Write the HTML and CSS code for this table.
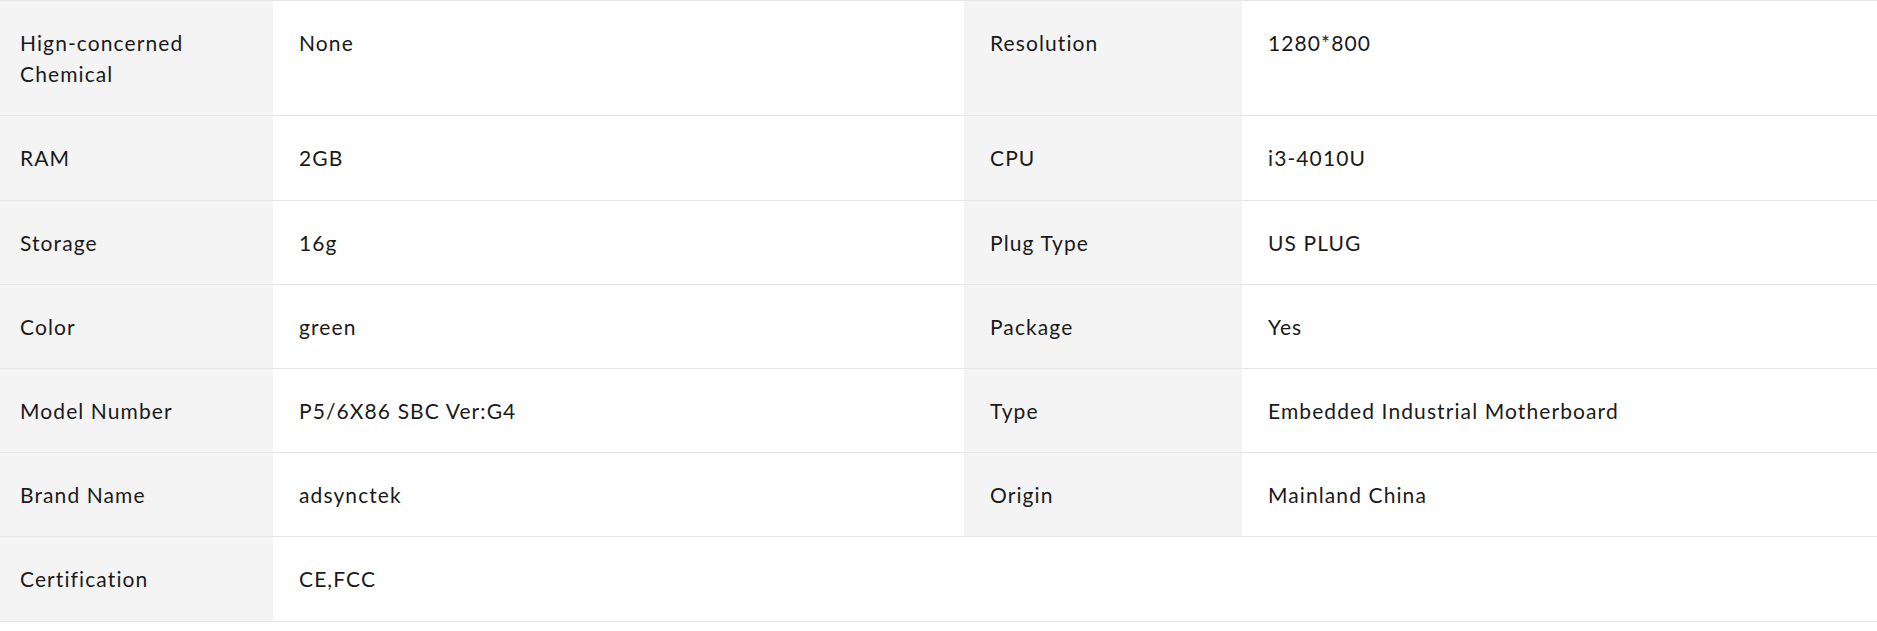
FILE: index.html
```html
<!DOCTYPE html>
<html lang="en">
<head>
  <meta charset="UTF-8">
  <meta name="viewport" content="width=device-width, initial-scale=1.0">
  <title>Specifications</title>
  <link rel="stylesheet" href="styles.css">
</head>
<body>
  <table class="spec-table">
    <colgroup>
      <col class="col-label">
      <col class="col-value">
      <col class="col-label2">
      <col>
    </colgroup>
    <tbody>
      <tr>
        <td class="spec-label">Hign-concerned<br>Chemical</td>
        <td class="spec-value">None</td>
        <td class="spec-label">Resolution</td>
        <td class="spec-value">1280*800</td>
      </tr>
      <tr>
        <td class="spec-label">RAM</td>
        <td class="spec-value">2GB</td>
        <td class="spec-label">CPU</td>
        <td class="spec-value">i3-4010U</td>
      </tr>
      <tr>
        <td class="spec-label">Storage</td>
        <td class="spec-value">16g</td>
        <td class="spec-label">Plug Type</td>
        <td class="spec-value">US PLUG</td>
      </tr>
      <tr>
        <td class="spec-label">Color</td>
        <td class="spec-value">green</td>
        <td class="spec-label">Package</td>
        <td class="spec-value">Yes</td>
      </tr>
      <tr>
        <td class="spec-label">Model Number</td>
        <td class="spec-value">P5/6X86 SBC Ver:G4</td>
        <td class="spec-label">Type</td>
        <td class="spec-value">Embedded Industrial Motherboard</td>
      </tr>
      <tr>
        <td class="spec-label">Brand Name</td>
        <td class="spec-value">adsynctek</td>
        <td class="spec-label">Origin</td>
        <td class="spec-value">Mainland China</td>
      </tr>
      <tr>
        <td class="spec-label">Certification</td>
        <td class="spec-value">CE,FCC</td>
        <td class="spec-empty"></td>
        <td class="spec-empty"></td>
      </tr>
    </tbody>
  </table>
</body>
</html>
```

FILE: styles.css
```css
body {
  margin: 0;
  padding: 0;
  background-color: #fff;
  font-family: Lato, "Open Sans", sans-serif;
  font-size: 21px;
  letter-spacing: 1.1px;
  color: #1a1a1a;
}
.spec-table {
  width: 100%;
  table-layout: fixed;
  border-collapse: collapse;
  border-top: 1px solid #e6e6e6;
}
.col-label {
  width: 273px;
}
.col-value {
  width: 691px;
}
.col-label2 {
  width: 278px;
}
.spec-table tr {
  border-bottom: 1px solid #e6e6e6;
}
.spec-table td {
  padding: 26px 26px;
  line-height: 31.2px;
  vertical-align: top;
}
.spec-label {
  background-color: #f4f4f4;
}
.spec-table td:first-child {
  padding-left: 20px;
}
```
